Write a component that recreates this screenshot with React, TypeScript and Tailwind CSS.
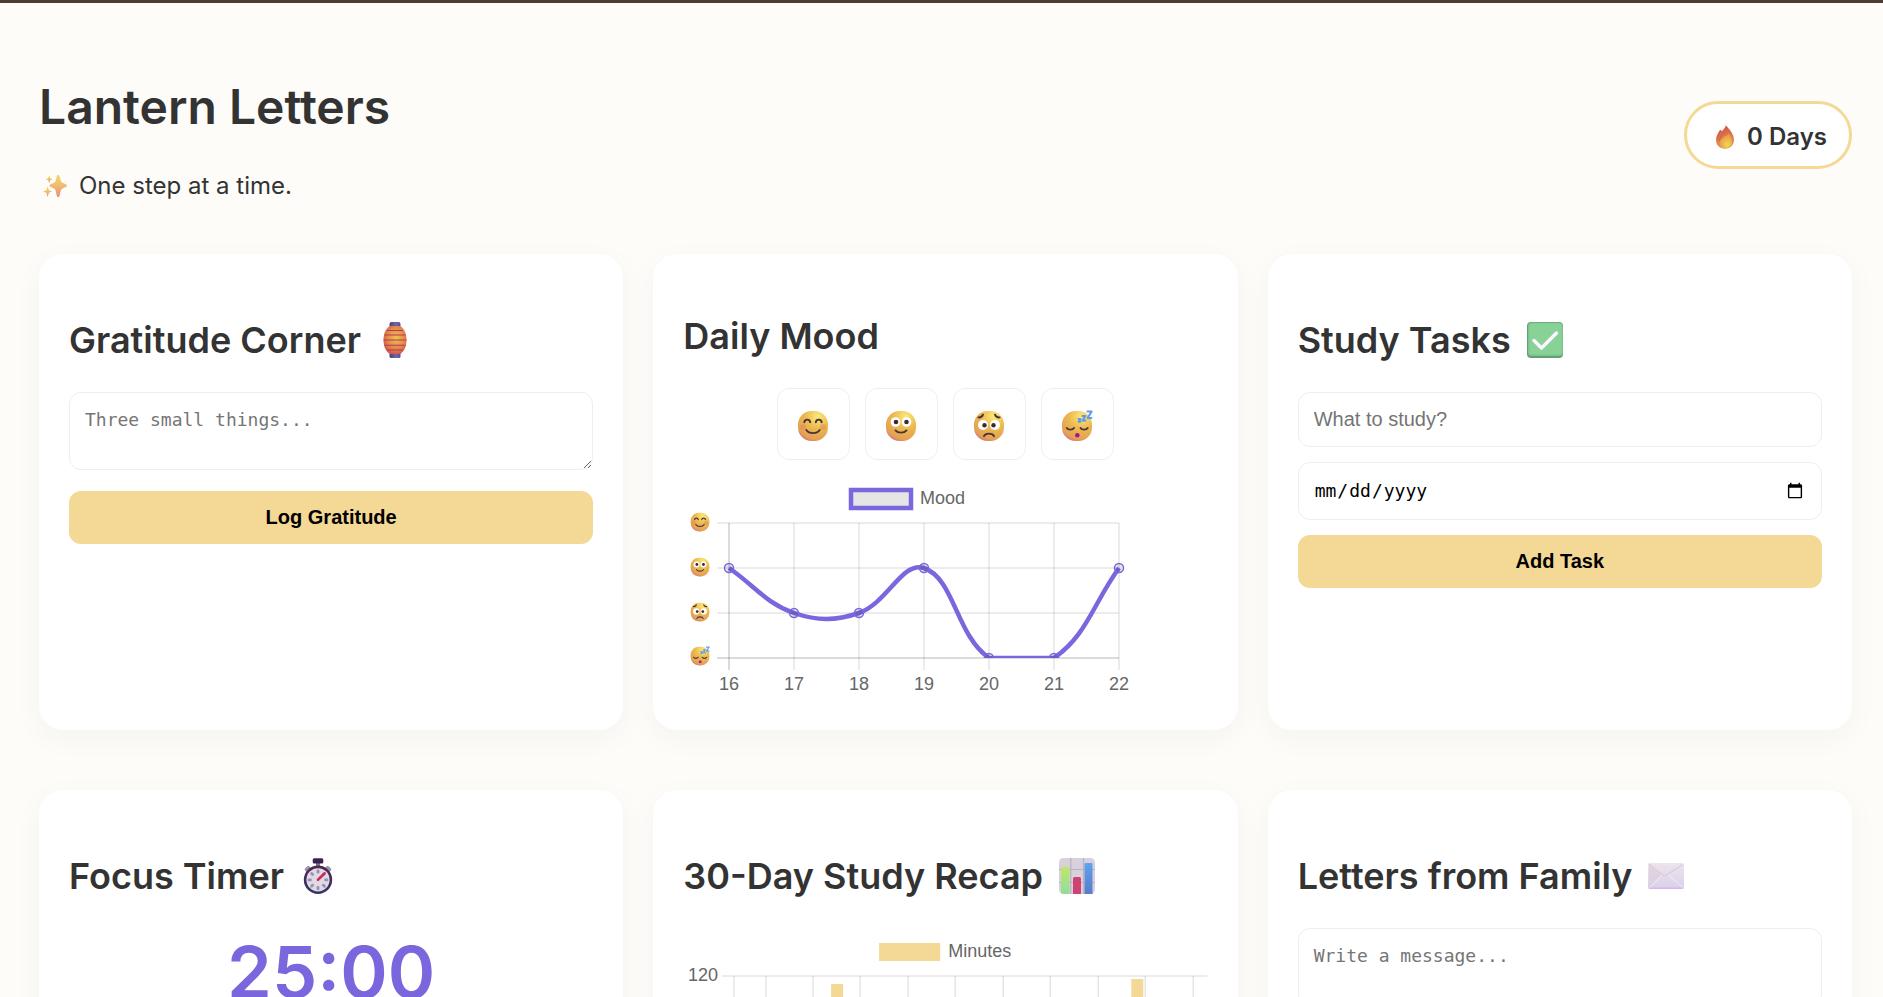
import React, { useState } from 'react'
import { clsx } from 'clsx'

interface IconProps {
    /** Tailwind size classes */
    className?: string
}

type MoodName = 'happy' | 'okay' | 'worried' | 'sleepy'

const MOODS: MoodName[] = ['happy', 'okay', 'worried', 'sleepy']

/** Shared gradients, referenced by id from the icons below */
function IconDefs() {
    return (
        <svg className="absolute h-0 w-0" aria-hidden="true">
            <defs>
                <radialGradient id="face" cx="0.66" cy="0.18" r="0.95">
                    <stop offset="0" stopColor="#fbe979" />
                    <stop offset="0.45" stopColor="#ecb84f" />
                    <stop offset="0.8" stopColor="#e3a254" />
                    <stop offset="1" stopColor="#cf6286" />
                </radialGradient>
                <linearGradient id="sparkle" x1="0" y1="0" x2="0" y2="1">
                    <stop offset="0" stopColor="#f1d765" />
                    <stop offset="0.5" stopColor="#efbb72" />
                    <stop offset="1" stopColor="#e68d7c" />
                </linearGradient>
                <linearGradient id="flame" x1="0.4" y1="0" x2="0.5" y2="1">
                    <stop offset="0" stopColor="#d2504a" />
                    <stop offset="0.5" stopColor="#df7c48" />
                    <stop offset="1" stopColor="#e3964c" />
                </linearGradient>
                <radialGradient id="flameCore" cx="0.6" cy="0.75" r="0.7">
                    <stop offset="0" stopColor="#f3d652" />
                    <stop offset="1" stopColor="#e5984a" />
                </radialGradient>
                <radialGradient id="lantern" cx="0.55" cy="0.42" r="0.62">
                    <stop offset="0" stopColor="#efc150" />
                    <stop offset="0.6" stopColor="#e38a4a" />
                    <stop offset="1" stopColor="#cf5648" />
                </radialGradient>
                <linearGradient id="lanternCap" x1="0" y1="0" x2="1" y2="0">
                    <stop offset="0" stopColor="#4c3f7c" />
                    <stop offset="0.6" stopColor="#7266a6" />
                    <stop offset="1" stopColor="#5a4d90" />
                </linearGradient>
                <linearGradient id="watchRim" x1="0" y1="0" x2="0" y2="1">
                    <stop offset="0" stopColor="#4e2850" />
                    <stop offset="1" stopColor="#33346a" />
                </linearGradient>
                <linearGradient id="barGreen" x1="0" y1="0" x2="0" y2="1">
                    <stop offset="0" stopColor="#bfe865" />
                    <stop offset="1" stopColor="#8fdd9c" />
                </linearGradient>
                <linearGradient id="barBlue" x1="0" y1="0" x2="0" y2="1">
                    <stop offset="0" stopColor="#5fa3ee" />
                    <stop offset="1" stopColor="#587bc9" />
                </linearGradient>
                <linearGradient id="envelope" x1="0" y1="0" x2="0" y2="1">
                    <stop offset="0" stopColor="#ebe5ec" />
                    <stop offset="0.9" stopColor="#ddd2ea" />
                    <stop offset="1" stopColor="#cdb2f0" />
                </linearGradient>
            </defs>
        </svg>
    )
}

/** Inner drawing of a mood face on a 32x32 board */
function FaceShapes({ mood }: { mood: MoodName }) {
    const ink = { fill: 'none', stroke: '#4a3040', strokeWidth: 1.9, strokeLinecap: 'round' as const }
    return (
        <>
            <rect x="1" y="1" width="30" height="30" rx="13.5" fill="url(#face)" />
            {mood === 'happy' && (
                <>
                    <circle cx="6" cy="17" r="3" fill="#e08060" opacity="0.45" />
                    <circle cx="26" cy="17" r="3" fill="#e08060" opacity="0.45" />
                    <path d="M7.3 12.2c.7-3.4 5.2-3.4 5.9 0M18.8 12.2c.7-3.4 5.2-3.4 5.9 0" {...ink} />
                    <path d="M9.3 20c2.8 4.2 10.6 4.2 13.4 0" {...ink} />
                </>
            )}
            {mood === 'okay' && (
                <>
                    <circle cx="10.5" cy="12" r="4.8" fill="#fff" />
                    <circle cx="21.5" cy="12" r="4.8" fill="#fff" />
                    <circle cx="11" cy="12" r="2.3" fill="#3f2836" />
                    <circle cx="21.5" cy="12" r="2.3" fill="#3f2836" />
                    <path d="M10.5 20.4c2.3 3 8.7 3 11 0" {...ink} />
                </>
            )}
            {mood === 'worried' && (
                <>
                    <path d="M5.4 7.4c2 .2 3.9-.8 4.6-2.7M26.6 7.4c-2 .2-3.9-.8-4.6-2.7" {...ink} />
                    <circle cx="10" cy="15" r="5" fill="#fff" />
                    <circle cx="22" cy="15" r="5" fill="#fff" />
                    <circle cx="11.5" cy="15.2" r="2.2" fill="#3f2836" />
                    <circle cx="20.5" cy="15.2" r="2.2" fill="#3f2836" />
                    <path d="M11 26.2c1.5-3.4 8.5-3.4 10 0" {...ink} />
                </>
            )}
            {mood === 'sleepy' && (
                <>
                    <path d="M5.8 18c1.4 2.2 5.8 2.2 7.2 0M19.5 18c1.4 2.2 5.8 2.2 7.2 0" {...ink} />
                    <circle cx="16.3" cy="25.3" r="2.3" fill="#a3178f" />
                    <path
                        d="M25.6 1.6h5l-4 6.4h4.6M20.6 6h3.8l-3 4.6h3.8M16.8 9h2.6l-1.8 2.8h2.6"
                        fill="none"
                        stroke="#5f9af0"
                        strokeWidth="2"
                        strokeLinejoin="round"
                    />
                </>
            )}
        </>
    )
}

function MoodFace({ mood, className }: IconProps & { mood: MoodName }) {
    return (
        <svg viewBox="0 0 32 32" className={className} aria-hidden="true">
            <FaceShapes mood={mood} />
        </svg>
    )
}

function SparklesIcon({ className }: IconProps) {
    return (
        <svg viewBox="0 0 24 24" className={className} aria-hidden="true" fill="url(#sparkle)">
            <path d="M15.2 1c.8 0 1.200.4 1.400 1.200l1.300 4.700c.3 1 .8 1.500 1.700 1.900l3.600 1.600c1 .5 1 1.900 0 2.400l-3.600 1.600c-.9.4-1.400.9-1.700 1.900l-1.300 5.500c-.2.8-.6 1.200-1.400 1.200s-1.200-.4-1.400-1.200l-1.300-5.500c-.3-1-.8-1.500-1.700-1.900l-3.600-1.600c-1-.5-1-1.900 0-2.400l3.600-1.600c.9-.4 1.400-.9 1.700-1.900l1.300-4.700c.2-.8.6-1.200 1.400-1.200z" />
            <path d="M6.200 1.400l1 2.900 2.400 1-2.400 1-1 2.900-1-2.900-2.400-1 2.400-1z" />
            <path d="M4.600 12.500l1.300 3.700 3.200 1.300-3.200 1.300-1.300 4.200-1.300-4.200L.1 17.500l3.200-1.300z" />
        </svg>
    )
}

function FlameIcon({ className }: IconProps) {
    return (
        <svg viewBox="0 0 24 24" className={className} aria-hidden="true">
            <path
                d="M12.800.3c2.600 3 8.200 8.200 8.200 14.300 0 5.600-3.700 9.200-9 9.200S3 20.200 3 14.800c0-3 1-4.800 2.200-6.500.4-1.500 1-2.600 2.300-3.600.8.3 1 .9 1 1.700 1.800-1.600 3.700-3.300 4.300-6.100z"
                fill="url(#flame)"
            />
            <path
                d="M7.700 6.500c-1.500 2.300-3 4.600-3 7.500M10.500 7.500c-2 2.300-3.600 4.500-3.800 8"
                fill="none"
                stroke="#c9574a"
                strokeWidth="0.9"
                strokeLinecap="round"
            />
            <path
                d="M16 8.500c1.800 3.300 3.300 5.400 3.100 8.600-.3 4-3 6.200-6.500 6.200s-5.800-2-5.800-5.200c0-3.800 2.600-4.800 4.800-6.400 1.700-1.200 3-1.700 4.400-3.200z"
                fill="url(#flameCore)"
            />
        </svg>
    )
}

function LanternIcon({ className }: IconProps) {
    return (
        <svg viewBox="0 0 36 36" className={className} aria-hidden="true">
            <rect x="12.5" y="0" width="11" height="6" rx="2" fill="url(#lanternCap)" />
            <rect x="12.5" y="30" width="11" height="6" rx="1.5" fill="url(#lanternCap)" />
            <path
                d="M13 4h10c4.500 2.500 6.500 8 6.500 14s-2 11.500-6.500 14H13c-4.500-2.500-6.500-8-6.500-14S8.500 6.500 13 4z"
                fill="url(#lantern)"
            />
            <path d="M10 8.500h16M7.500 13h21M6.500 18h23M7.500 23.200h21M10 28h16" stroke="#b63a55" strokeWidth="1.1" />
        </svg>
    )
}

function CheckIcon({ className }: IconProps) {
    return (
        <svg viewBox="0 0 36 36" className={className} aria-hidden="true">
            <rect width="36" height="36" rx="4" fill="#649f78" />
            <rect x="1" y="0.5" width="35" height="33.5" rx="3.5" fill="#7cc48b" />
            <rect x="2.5" y="1.5" width="32" height="31" rx="2" fill="#88d197" />
            <path
                d="M7 18.500l7.500 7.500L29.500 11"
                fill="none"
                stroke="#fbf6ff"
                strokeWidth="3.4"
                strokeLinecap="round"
                strokeLinejoin="round"
            />
        </svg>
    )
}

function StopwatchIcon({ className }: IconProps) {
    return (
        <svg viewBox="0 0 36 36" className={className} aria-hidden="true">
            <rect x="16" y="4" width="4" height="5" fill="#7d7688" />
            <rect x="12.7" y="0.3" width="10.6" height="5.2" rx="1.5" fill="#3a2150" />
            <rect x="4.5" y="8.5" width="6" height="4.5" rx="1.5" fill="#9a94a5" transform="rotate(-42 8 10.5)" />
            <rect x="25.5" y="8.5" width="6" height="4.5" rx="1.5" fill="#9a94a5" transform="rotate(42 28 10.5)" />
            <circle cx="18" cy="21.8" r="14.2" fill="url(#watchRim)" />
            <circle cx="18" cy="21.8" r="11.6" fill="#e0d9e8" />
            {[0, 45, 90, 135, 180, 225, 270, 315].map((angle) => (
                <rect
                    key={angle}
                    x="16.6"
                    y="11.4"
                    width="2.8"
                    height="4.2"
                    rx="1.3"
                    fill="#9b93a3"
                    transform={`rotate(${angle} 18 21.8)`}
                />
            ))}
            <path d="M18 21.800l6.500-6.300" stroke="#c92c58" strokeWidth="2.6" strokeLinecap="round" />
        </svg>
    )
}

function BarChartIcon({ className }: IconProps) {
    return (
        <svg viewBox="0 0 36 36" className={className} aria-hidden="true">
            <rect width="36" height="36" rx="4.5" fill="#d8d1dd" />
            <path d="M11.800 0v36M24.500 0v36M0 11.500h36M0 24.500h36" stroke="#b9b1c0" strokeWidth="1.2" />
            <path d="M2 9h8.500v27h-6A2.500 2.500 0 0 1 2 33.500z" fill="url(#barGreen)" />
            <path d="M14 20.500a1.500 1.500 0 0 1 1.500-1.500h5a1.500 1.500 0 0 1 1.500 1.500V36h-8z" fill="#cf4272" />
            <path d="M25.500 6a1 1 0 0 1 1-1h6a1 1 0 0 1 1 1v30h-8z" fill="url(#barBlue)" />
        </svg>
    )
}

function EnvelopeIcon({ className }: IconProps) {
    return (
        <svg viewBox="0 0 36 36" className={className} aria-hidden="true">
            <rect y="5" width="36" height="26" rx="2" fill="url(#envelope)" />
            <path d="M1 6.500l13 11L1 29.500z" fill="#ddcfdc" opacity="0.7" />
            <path d="M1 6l15.500 12.200L35 6.500" fill="none" stroke="#cfc2da" strokeWidth="0.9" />
            <path d="M1.500 29.500L14 17M35 29.500L20 16.500" fill="none" stroke="#f4eef6" strokeWidth="0.9" />
        </svg>
    )
}

interface CardProps {
    title: string
    /** Icon shown after the title */
    icon?: React.ReactNode
    children?: React.ReactNode
}

function Card({ title, icon, children }: CardProps) {
    return (
        <section className="min-w-0 rounded-3xl bg-white p-[30px] shadow-[0_8px_30px_rgba(0,0,0,0.04)]">
            <h2
                className={clsx(
                    'my-[30px] flex items-center gap-4 text-4xl leading-[44px] font-semibold',
                    icon && 'pt-1'
                )}
            >
                {title}
                {icon}
            </h2>
            {children}
        </section>
    )
}

const fieldClasses =
    'block w-full rounded-xl border border-[#eee] bg-white px-[15px] text-black placeholder:text-[#757575]'

function PrimaryButton({ children }: { children: React.ReactNode }) {
    return (
        <button
            type="button"
            className="block w-full cursor-pointer rounded-xl bg-[#f4d895] py-[15px] font-['Liberation_Sans',Arial,sans-serif] text-xl leading-[23px] font-bold text-black"
        >
            {children}
        </button>
    )
}

function NoteArea({ label, placeholder }: { label: string; placeholder: string }) {
    return (
        <textarea
            aria-label={label}
            placeholder={placeholder}
            rows={2}
            className={clsx(
                fieldClasses,
                "h-[78px] py-[15px] font-['DejaVu_Sans_Mono',monospace] text-lg leading-[23px]"
            )}
        />
    )
}

const MOOD_DAYS = [16, 17, 18, 19, 20, 21, 22]
const MOOD_ROWS = [2, 3, 3, 2, 4, 4, 2]
const moodX = (index: number) => 46 + index * 65
const moodY = (row: number) => 3 + row * 45

/** Line chart of the last seven days */
function MoodChart() {
    return (
        <svg
            width="450"
            height="225"
            viewBox="0 0 450 225"
            className="mt-[15px] block max-w-full font-['Liberation_Sans',Arial,sans-serif] text-lg"
            role="img"
            aria-label="Mood over the last seven days"
        >
            <defs>
                <clipPath id="moodArea">
                    <rect x="0" y="40" width="450" height="143" />
                </clipPath>
            </defs>
            {/* Legend */}
            <rect x="168" y="15" width="60" height="18" fill="#e5e5e5" stroke="#7b66de" strokeWidth="4.5" />
            <text x="237" y="29" fill="#666">Mood</text>

            {/* Grid */}
            {MOODS.map((mood, i) => (
                <g key={mood}>
                    <path
                        d={`M34 ${moodY(i + 1)}H436`}
                        stroke="#000"
                        strokeOpacity={i === 3 ? 0.19 : 0.1}
                        strokeWidth="1.5"
                    />
                    <svg x="7" y={moodY(i + 1) - (i === 3 ? 12 : 11)} width="20" height="20" viewBox="0 0 32 32">
                        <FaceShapes mood={mood} />
                    </svg>
                </g>
            ))}
            {MOOD_DAYS.map((day, i) => (
                <g key={day}>
                    <path
                        d={`M${moodX(i)} 48V195`}
                        stroke="#000"
                        strokeOpacity={i === 0 ? 0.19 : 0.1}
                        strokeWidth="1.5"
                    />
                    <text x={moodX(i)} y="215" fill="#666" textAnchor="middle">{day}</text>
                </g>
            ))}

            {/* Line and points */}
            <g clipPath="url(#moodArea)">
                <path
                    d="M46 93C72 111 82.500 128 111 138C134.500 146 152.500 146 176 138C204.500 128 219.400 85.500 241 93C271.400 103.500 273 160 306 183C325 183 352 183 371 183C404 160 410 129 436 93"
                    fill="none"
                    stroke="#7b66de"
                    strokeWidth="4.5"
                />
                {MOOD_ROWS.map((row, i) => (
                    <circle
                        key={MOOD_DAYS[i]}
                        cx={moodX(i)}
                        cy={moodY(row)}
                        r="4.5"
                        fill="#000"
                        fillOpacity="0.1"
                        stroke="#7b66de"
                        strokeWidth="1.5"
                    />
                ))}
            </g>
        </svg>
    )
}

const RECAP_LINES = [51, 83, 130, 177, 225, 272, 320, 367, 415, 462, 510]
const RECAP_BARS = [
    { x: 148, top: 56 },
    { x: 448, top: 51 },
]

/** Bar chart of minutes studied per day */
function RecapChart() {
    return (
        <svg
            viewBox="0 0 524 262"
            className="block w-full font-['Liberation_Sans',Arial,sans-serif] text-lg"
            role="img"
            aria-label="Minutes studied over thirty days"
        >
            <rect x="196" y="15" width="61" height="18" fill="#f4d895" />
            <text x="265" y="29" fill="#666">Minutes</text>
            <text x="35" y="53" fill="#666" textAnchor="end">120</text>
            <path d="M39 48H524" stroke="#000" strokeOpacity="0.1" strokeWidth="1.5" />
            {RECAP_LINES.map((x) => (
                <path key={x} d={`M${x} 48V230`} stroke="#000" strokeOpacity="0.1" strokeWidth="1.5" />
            ))}
            {RECAP_BARS.map((bar) => (
                <rect key={bar.x} x={bar.x} y={bar.top} width="12" height={218 - bar.top} fill="#f4d895" />
            ))}
        </svg>
    )
}

export default function App() {
    const [mood, setMood] = useState<MoodName | null>(null)

    return (
        <div className="min-h-screen border-t-[3px] border-[#4f3a35] bg-[#fdfcf8] pt-[43px] pr-[31px] pb-10 pl-[39px] font-['Inter',sans-serif] text-[#333]">
            <IconDefs />

            <header className="mb-[30px] flex items-center justify-between">
                <div className="pt-8 pb-6">
                    <h1 className="text-5xl leading-[58px] font-semibold">Lantern Letters</h1>
                    <p className="mt-[35px] flex items-center gap-3 text-2xl leading-[29px]">
                        <SparklesIcon className="ml-1 size-6" />
                        One step at a time.
                    </p>
                </div>
                <div className="flex items-center gap-2.5 rounded-full border-[3px] border-[#f4d895] bg-white px-[22px] pt-[18px] pb-[15px] text-2xl leading-[29px] font-semibold">
                    <FlameIcon className="ml-1 size-6" />
                    0 Days
                </div>
            </header>

            <main className="grid grid-cols-3 gap-x-[30px] gap-y-[60px]">
                <Card title="Gratitude Corner" icon={<LanternIcon className="size-9" />}>
                    <div className="flex flex-col gap-[21px]">
                        <NoteArea label="Gratitude" placeholder="Three small things..." />
                        <PrimaryButton>Log Gratitude</PrimaryButton>
                    </div>
                </Card>

                <Card title="Daily Mood">
                    <div className="flex justify-center gap-[15px]">
                        {MOODS.map((name) => (
                            <button
                                key={name}
                                type="button"
                                aria-label={name}
                                aria-pressed={mood === name}
                                onClick={() => setMood(name)}
                                className="flex h-[72px] w-[73px] cursor-pointer items-center justify-center rounded-xl border border-[#eee] bg-white pt-1"
                            >
                                <MoodFace mood={name} className="size-8" />
                            </button>
                        ))}
                    </div>
                    <MoodChart />
                </Card>

                <Card title="Study Tasks" icon={<CheckIcon className="size-9" />}>
                    <div className="flex flex-col gap-[15px]">
                        <input
                            type="text"
                            aria-label="Task"
                            placeholder="What to study?"
                            className={clsx(fieldClasses, "h-[55px] font-['Liberation_Sans',Arial,sans-serif] text-xl")}
                        />
                        <input
                            type="date"
                            aria-label="Due date"
                            className={clsx(fieldClasses, "h-[58px] font-['DejaVu_Sans_Mono',monospace] text-lg")}
                        />
                        <PrimaryButton>Add Task</PrimaryButton>
                    </div>
                </Card>

                <Card title="Focus Timer" icon={<StopwatchIcon className="size-9" />}>
                    <div className="text-center text-7xl leading-[87px] font-semibold text-[#7b66de]">25:00</div>
                </Card>

                <Card title="30-Day Study Recap" icon={<BarChartIcon className="size-9" />}>
                    <RecapChart />
                </Card>

                <Card title="Letters from Family" icon={<EnvelopeIcon className="size-9" />}>
                    <NoteArea label="Message" placeholder="Write a message..." />
                </Card>
            </main>
        </div>
    )
}
